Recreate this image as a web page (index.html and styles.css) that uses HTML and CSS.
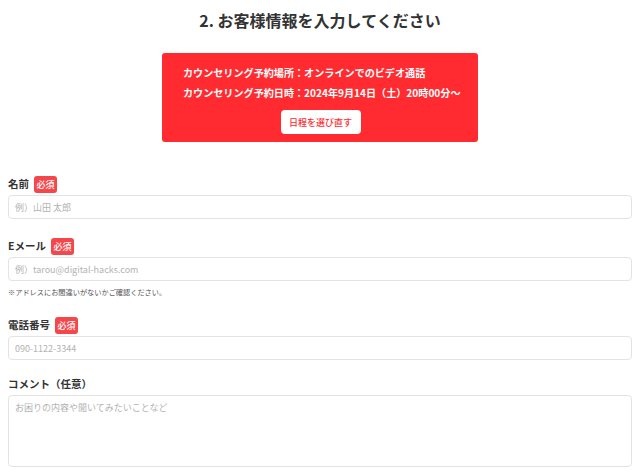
FILE: index.html
```html
<!DOCTYPE html>
<html lang="ja">
<head>
<meta charset="utf-8">
<title>お客様情報</title>
<link rel="stylesheet" href="styles.css">
</head>
<body>
<h1 class="title">2. お客様情報を入力してください</h1>
<div class="info">
  <p class="info-line">カウンセリング予約場所：オンラインでのビデオ通話</p>
  <p class="info-line">カウンセリング予約日時：2024年9月14日（土）20時00分～</p>
  <div class="info-actions"><button class="rebook" type="button">日程を選び直す</button></div>
</div>
<form class="form">
  <div class="field">
    <div class="label-row"><span class="label">名前</span><span class="badge">必須</span></div>
    <input class="input" type="text" placeholder="例）山田 太郎">
  </div>
  <div class="field">
    <div class="label-row"><span class="label">Eメール</span><span class="badge">必須</span></div>
    <input class="input" type="email" placeholder="例）tarou@digital-hacks.com">
    <p class="note">※アドレスにお間違いがないかご確認ください。</p>
  </div>
  <div class="field">
    <div class="label-row"><span class="label">電話番号</span><span class="badge">必須</span></div>
    <input class="input" type="tel" placeholder="090-1122-3344">
  </div>
  <div class="field field-comment">
    <div class="label-row"><span class="label">コメント（任意）</span></div>
    <textarea class="textarea" placeholder="お困りの内容や聞いてみたいことなど"></textarea>
  </div>
</form>
</body>
</html>
```

FILE: styles.css
```css
* { box-sizing: border-box; }
html, body { background: #ffffff; }
body {
  margin: 0;
  padding: 8px 8px 0;
  font-family: "Noto Sans CJK JP", "Noto Sans", sans-serif;
  color: #333333;
}
.title {
  margin: 0;
  font-size: 16px;
  line-height: 24px;
  font-weight: 700;
  text-align: center;
  color: #333333;
}
.info {
  width: 316px;
  margin: 21px auto 0;
  padding: 10px 18px 8px 21px;
  background: #ff2b30;
  border-radius: 3px;
  color: #ffffff;
}
.info-line {
  margin: 0;
  font-size: 10.1px;
  line-height: 20px;
  font-weight: 700;
  white-space: nowrap;
}
.info-actions {
  display: flex;
  justify-content: center;
  margin-top: 7px;
  padding-right: 2px;
}
.rebook {
  width: 80px;
  height: 24px;
  padding: 0;
  border: none;
  border-radius: 4px;
  background: #ffffff;
  color: #ff2b30;
  font-family: inherit;
  font-size: 9px;
  font-weight: 500;
}
.form {
  margin-top: 34px;
}
.field {
  margin-bottom: 19px;
}
.label-row {
  display: flex;
  align-items: center;
  gap: 5px;
  height: 16px;
  margin-bottom: 3px;
}
.label {
  font-size: 10.5px;
  line-height: 16px;
  font-weight: 700;
  color: #333333;
}
.badge {
  display: inline-flex;
  align-items: center;
  justify-content: center;
  width: 23px;
  height: 17px;
  border-radius: 3px;
  background: #f5474b;
  color: #ffffff;
  font-size: 9px;
  font-weight: 500;
}
.input, .textarea {
  display: block;
  width: 100%;
  border: 1px solid #e3e3e3;
  border-radius: 4px;
  background: #ffffff;
  font-family: inherit;
  font-size: 9px;
  color: #333333;
  padding: 0 6px;
  outline: none;
}
.input { height: 24px; }
.textarea {
  height: 72px;
  padding: 5px 6px;
  resize: none;
}
.input::placeholder, .textarea::placeholder { color: #b3b3b3; }
.note {
  margin: 5px 0 0;
  font-size: 7.2px;
  line-height: 12px;
  color: #555555;
}
.field-comment { margin-top: -3px; }
```
